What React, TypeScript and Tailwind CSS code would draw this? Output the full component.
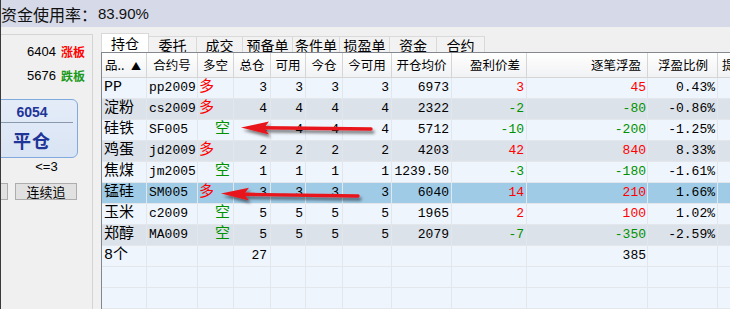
import React from "react";

const W = [45, 51, 36, 37, 35, 37, 49, 60, 75, 121, 70];

type R = {
  n: string; c: string; d: "多" | "空"; q: string; open: string; diff: string; fp: string; pct: string; up: boolean;
};

const rows: R[] = [
  { n: "PP", c: "pp2009", d: "多", q: "3", open: "6973", diff: "3", fp: "45", pct: "0.43%", up: true },
  { n: "淀粉", c: "cs2009", d: "多", q: "4", open: "2322", diff: "-2", fp: "-80", pct: "-0.86%", up: false },
  { n: "硅铁", c: "SF005", d: "空", q: "4", open: "5712", diff: "-10", fp: "-200", pct: "-1.25%", up: false },
  { n: "鸡蛋", c: "jd2009", d: "多", q: "2", open: "4203", diff: "42", fp: "840", pct: "8.33%", up: true },
  { n: "焦煤", c: "jm2005", d: "空", q: "1", open: "1239.50", diff: "-3", fp: "-180", pct: "-1.61%", up: false },
  { n: "锰硅", c: "SM005", d: "多", q: "3", open: "6040", diff: "14", fp: "210", pct: "1.66%", up: true },
  { n: "玉米", c: "c2009", d: "空", q: "5", open: "1965", diff: "2", fp: "100", pct: "1.02%", up: true },
  { n: "郑醇", c: "MA009", d: "空", q: "5", open: "2079", diff: "-7", fp: "-350", pct: "-2.59%", up: false },
];

const cellB = "h-full shrink-0 border-r border-[#e3e7ec] flex items-center overflow-hidden whitespace-nowrap";

function Cell({ w, className = "", children }: { w: number; className?: string; children?: React.ReactNode }) {
  return (
    <div className={`${cellB} ${className}`} style={{ width: w }}>
      {children}
    </div>
  );
}

function DataRow({ r, bg }: { r: R; bg: string }) {
  const col = r.up ? "text-[#ff0000]" : "text-[#009100]";
  return (
    <div className={`flex h-[21px] border-b border-[#e3e7ec] ${bg}`}>
      <Cell w={W[0]} className="pl-[2px] text-[15px]">{r.n}</Cell>
      <Cell w={W[1]} className="pl-[2px]">{r.c}</Cell>
      <Cell w={W[2]} className={r.d === "多" ? "pl-[1px] text-[15px] text-[#ff0000]" : "pl-[17px] text-[15px] text-[#009100]"}>{r.d}</Cell>
      <Cell w={W[3]} className="justify-end pr-[3px]">{r.q}</Cell>
      <Cell w={W[4]} className="justify-end pr-[2px]">{r.q}</Cell>
      <Cell w={W[5]} className="justify-end pr-[3px]">{r.q}</Cell>
      <Cell w={W[6]} className="justify-end pr-[2px]">{r.q}</Cell>
      <Cell w={W[7]} className="justify-end pr-[2px]">{r.open}</Cell>
      <Cell w={W[8]} className={`justify-end pr-[2px] ${col}`}>{r.diff}</Cell>
      <Cell w={W[9]} className={`justify-end pr-[1px] ${col}`}>{r.fp}</Cell>
      <Cell w={W[10]} className="justify-end pr-[2px]">{r.pct}</Cell>
      <div className="flex-1" />
    </div>
  );
}

function BlankRow({ children }: { children?: React.ReactNode }) {
  return (
    <div className="flex h-[21px] border-b border-[#e3e7ec] bg-[#eff5fc]">
      {children ?? (
        <>
          {W.map((w, i) => (
            <Cell key={i} w={w} />
          ))}
          <div className="flex-1" />
        </>
      )}
    </div>
  );
}

const headers: { t: string; cls: string }[] = [
  { t: "合约号", cls: "justify-center" },
  { t: "多空", cls: "justify-center" },
  { t: "总仓", cls: "justify-center" },
  { t: "可用", cls: "justify-center" },
  { t: "今仓", cls: "justify-center" },
  { t: "今可用", cls: "justify-center" },
  { t: "开仓均价", cls: "justify-center" },
  { t: "盈利价差", cls: "justify-end pr-[6px]" },
  { t: "逐笔浮盈", cls: "justify-end pr-[6px]" },
  { t: "浮盈比例", cls: "justify-end pr-[9px]" },
];

const tabs = [
  { t: "委托", w: 48 },
  { t: "成交", w: 46 },
  { t: "预备单", w: 50 },
  { t: "条件单", w: 47 },
  { t: "损盈单", w: 50 },
  { t: "资金", w: 47 },
  { t: "合约", w: 48 },
];

export default function App() {
  const cjk = "font-['Noto_Sans_CJK_SC',sans-serif]";
  return (
    <div className="relative w-[730px] h-[309px] overflow-hidden bg-[#f0f0f0] border-l border-[#3a3a3a] text-black font-['Liberation_Mono','Noto_Sans_CJK_SC',monospace] text-[13px]">
      {/* top bar */}
      <div className={`h-[27px] bg-[#d6d9e8] flex items-center ${cjk} text-[16px] leading-none text-[#111]`}>
        <span>资金使用率：</span>
        <span className="font-['Liberation_Sans',sans-serif] text-[15px] ml-[1px]">83.90%</span>
      </div>

      <div className="flex h-[282px]">
        {/* left panel */}
        <div className="w-[100px] shrink-0 pt-[7px]">
          <div className="w-[92px] h-full border-t border-r border-[#d4d4d4] flex flex-col">
            <div className="mt-[10px] flex justify-end items-center h-[14px] pr-[7px] gap-[5px]">
              <span className="font-['Liberation_Sans',sans-serif] text-[13px]">6404</span>
              <span className={`${cjk} text-[12px] font-bold text-[#ff0000]`}>涨板</span>
            </div>
            <div className="mt-[10px] flex justify-end items-center h-[14px] pr-[7px] gap-[5px]">
              <span className="font-['Liberation_Sans',sans-serif] text-[13px]">5676</span>
              <span className={`${cjk} text-[12px] font-bold text-[#1a9a1a]`}>跌板</span>
            </div>
            <div className="mt-[16px] -ml-[15px] w-[92px] h-[59px] rounded-[6px] border border-[#80aade] bg-gradient-to-b from-[#e4ecf8] to-[#d9e4f4] flex flex-col">
              <div className="pt-[4px] h-[20px] flex justify-center items-center font-['Liberation_Sans',sans-serif] font-bold text-[14px] text-[#1f3597] leading-none">
                6054
              </div>
              <div className="mt-[2px] ml-[14px] mr-[4px] h-px bg-[#8a98ae]" />
              <div className={`flex-1 flex justify-center items-center ${cjk} font-bold text-[18px] text-[#1f3597] tracking-[1px]`}>
                平仓
              </div>
            </div>
            <div className="mt-[2px] h-[14px] flex justify-center items-center font-['Liberation_Sans',sans-serif] text-[13px]">
              &lt;=3
            </div>
            <div className="mt-[9px] flex items-center">
              <div className="-ml-[30px] w-[37px] h-[17px] border border-[#adadad] bg-[#e1e1e1]" />
              <div className={`ml-[7px] w-[62px] h-[17px] border border-[#adadad] bg-[#e1e1e1] flex items-center justify-center ${cjk} text-[13px] leading-none`}>
                连续追
              </div>
            </div>
          </div>
        </div>

        {/* right panel */}
        <div className="flex-1 flex flex-col min-w-0">
          <div className={`h-[25px] flex items-end ${cjk} text-[14px] leading-none`}>
            <div className="w-[48px] h-[19px] bg-white border-t border-l border-r border-[#d9d9d9] flex items-center justify-center">
              持仓
            </div>
            {tabs.map((t) => (
              <div
                key={t.t}
                className="h-[16px] bg-[#f2f2f2] border-t border-r border-[#d9d9d9] flex items-center justify-center"
                style={{ width: t.w }}
              >
                {t.t}
              </div>
            ))}
          </div>
          <div className="flex-1 border-t border-l border-[#828790] flex flex-col">
            {/* header */}
            <div className={`flex h-[25px] border-b border-[#d5d5d5] bg-gradient-to-b from-white to-[#f1f2f4] ${cjk} text-[12.5px]`}>
              <div className="shrink-0 h-full border-r border-[#d5d5d5] flex items-center justify-between pl-[3px] pr-[5px]" style={{ width: W[0] }}>
                <span>品..</span>
                <span className="text-[10px]">▲</span>
              </div>
              {headers.map((h, i) => (
                <div key={h.t} className={`shrink-0 h-full border-r border-[#d5d5d5] flex items-center whitespace-nowrap overflow-hidden ${h.cls}`} style={{ width: W[i + 1] }}>
                  {h.t}
                </div>
              ))}
              <div className="flex-1 flex items-center pl-[4px] overflow-hidden whitespace-nowrap">提</div>
            </div>
            {rows.map((r, i) => (
              <DataRow
                key={r.n}
                r={r}
                bg={i === 5 ? "bg-[#9fcbe7]" : i % 2 === 1 ? "bg-[#dce2ea]" : "bg-[#eff5fc]"}
              />
            ))}
            <BlankRow>
              <Cell w={W[0]} className="pl-[2px] text-[15px]">8个</Cell>
              <Cell w={W[1]} />
              <Cell w={W[2]} />
              <Cell w={W[3]} className="justify-end pr-[3px]">27</Cell>
              <Cell w={W[4]} />
              <Cell w={W[5]} />
              <Cell w={W[6]} />
              <Cell w={W[7]} />
              <Cell w={W[8]} />
              <Cell w={W[9]} className="justify-end pr-[1px]">385</Cell>
              <Cell w={W[10]} />
              <div className="flex-1" />
            </BlankRow>
            <BlankRow />
            <BlankRow />
          </div>
        </div>
      </div>

      {/* annotation arrows */}
      <svg className="absolute left-0 top-0 pointer-events-none" width="730" height="309" viewBox="0 0 730 309">
        <defs>
          <filter id="sh" x="-20%" y="-100%" width="140%" height="300%">
            <feDropShadow dx="2" dy="3" stdDeviation="1.6" floodColor="#000" floodOpacity="0.5" />
          </filter>
        </defs>
        <g filter="url(#sh)" fill="#e8161b" stroke="#e8161b">
          <line x1="262" y1="127.8" x2="370" y2="129" strokeWidth="3.4" strokeLinecap="round" />
          <polygon points="240,127.5 268,121.5 263,128 268,134.5" stroke="none" />
          <line x1="242" y1="194.3" x2="357" y2="196" strokeWidth="3.4" strokeLinecap="round" />
          <polygon points="220,193.5 248,187.8 243,194.3 248,200.5" stroke="none" />
        </g>
      </svg>
    </div>
  );
}
